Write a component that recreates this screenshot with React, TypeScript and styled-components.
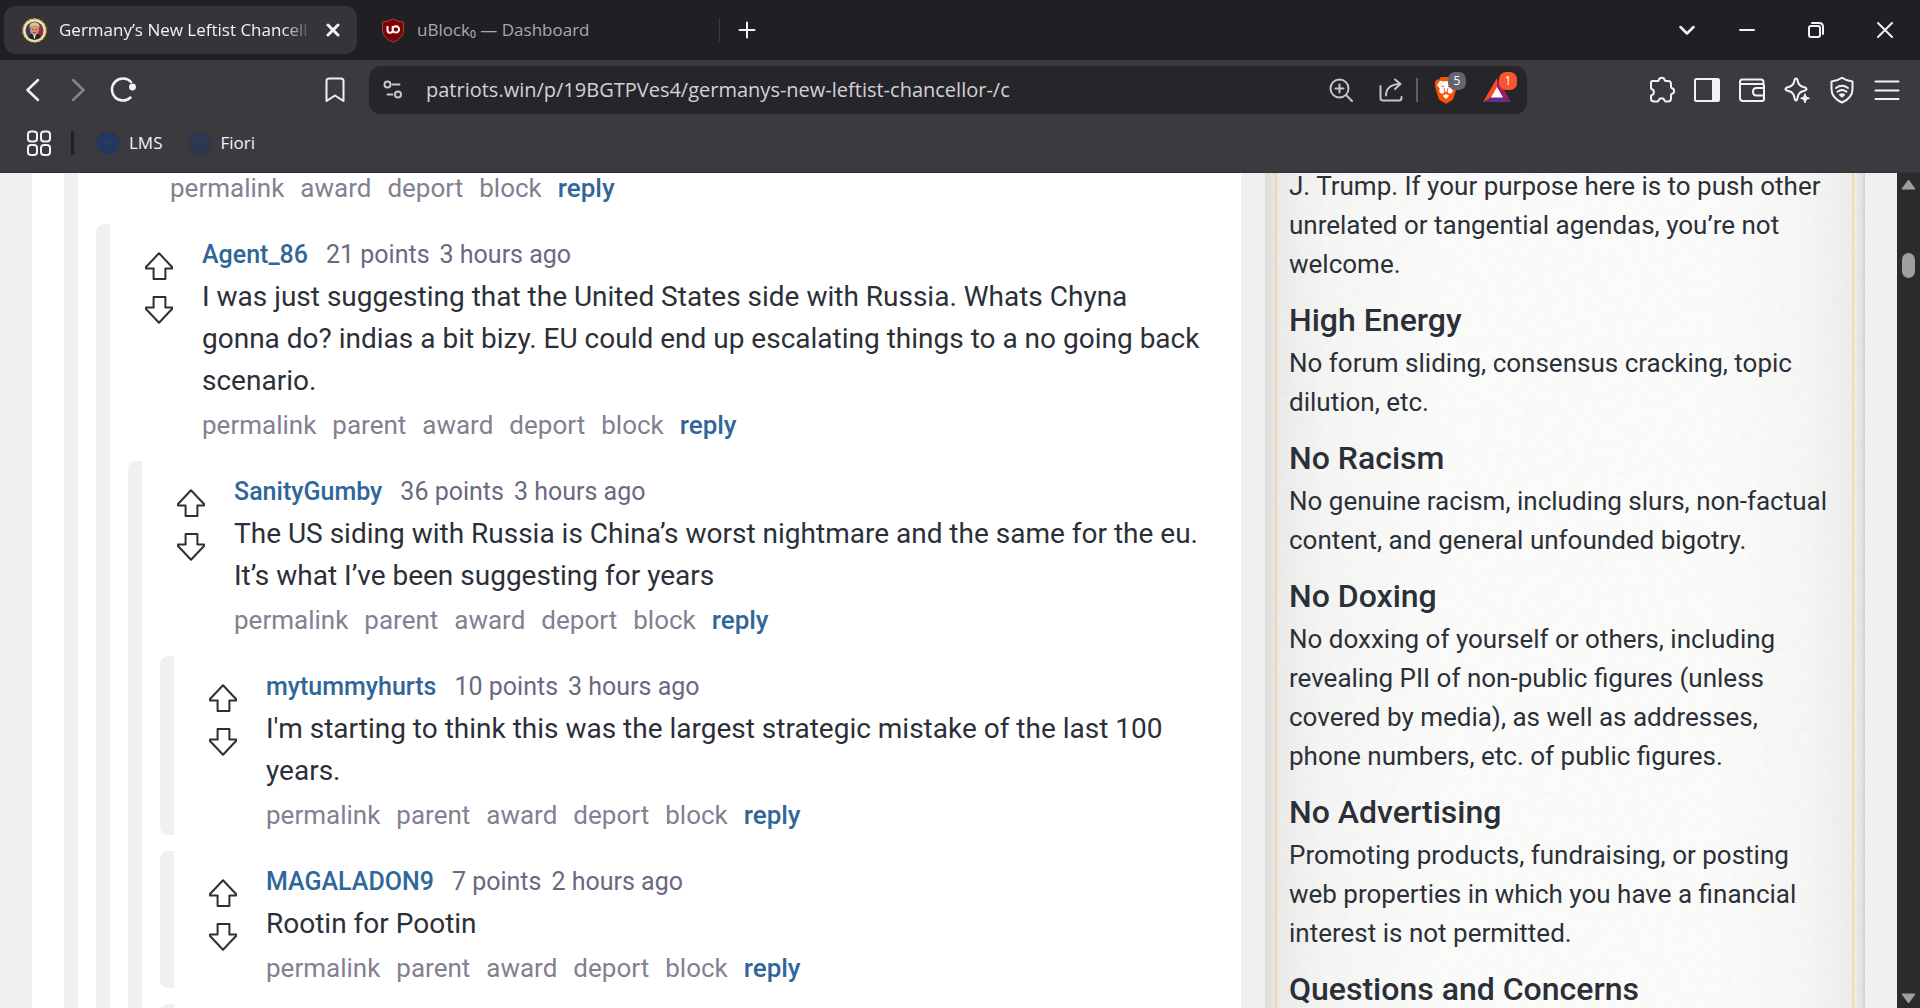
import React from "react";
import styled, { createGlobalStyle } from "styled-components";

const GlobalStyle = createGlobalStyle`
  *, *::before, *::after { box-sizing: border-box; }
  body { margin: 0; background: #eff0f2; overflow: hidden; }
  button, input { font: inherit; color: inherit; }
  h2, p { margin: 0; }
`;

const chromeFont = `"Open Sans", "Noto Sans", sans-serif`;
const pageFont = `Roboto, "Liberation Sans", sans-serif`;

const Browser = styled.div`
  display: flex;
  flex-direction: column;
  height: 100vh;
  overflow: hidden;
  font-family: ${chromeFont};
  color: #f2f2f5;
`;

/* ---------- tab strip ---------- */

const TabStrip = styled.header`
  display: flex;
  align-items: center;
  height: 60px;
  flex: none;
  padding: 0 1px 0 4px;
  background: #201f24;
`;

const Tab = styled.div<{ $active?: boolean }>`
  display: flex;
  align-items: center;
  gap: 12px;
  width: ${(p) => (p.$active ? 353 : 360)}px;
  height: 48px;
  padding: 0 16px 0 ${(p) => (p.$active ? 18 : 24)}px;
  border-radius: 12px;
  background: ${(p) => (p.$active ? "#353439" : "transparent")};
  color: ${(p) => (p.$active ? "#f2f2f5" : "#a9a8ad")};
  font-size: 17px;
  line-height: 24px;
`;

const TabTitle = styled.span<{ $fade?: boolean }>`
  flex: 1;
  min-width: 0;
  overflow: hidden;
  white-space: nowrap;
  mask-image: ${(p) => (p.$fade ? "linear-gradient(90deg, #000 88%, transparent)" : "none")};
`;

const TabSeparator = styled.span`
  width: 1px;
  height: 24px;
  margin-left: 2px;
  background: #3e3d42;
`;

const IconButton = styled.button<{ $width: number; $dim?: boolean }>`
  display: flex;
  align-items: center;
  justify-content: center;
  position: relative;
  flex: none;
  width: ${(p) => p.$width}px;
  height: 40px;
  padding: 0;
  border: 0;
  background: none;
  opacity: ${(p) => (p.$dim ? 0.4 : 1)};
`;

const WindowControls = styled.div`
  display: flex;
  align-items: center;
  margin-left: auto;
`;

/* ---------- toolbar ---------- */

const Toolbar = styled.div`
  display: flex;
  align-items: center;
  height: 60px;
  flex: none;
  padding: 0 11px 0 10px;
  background: #3b3a3e;
`;

const NavGroup = styled.nav`
  display: flex;
  width: 347px;
  margin-right: 12px;

  & > :last-child { margin-left: auto; }
`;

const AddressBar = styled.div`
  display: flex;
  align-items: center;
  flex: 1;
  min-width: 0;
  height: 48px;
  margin-right: 112px;
  padding: 0 5px 0 0;
  border-radius: 12px;
  background: #26252a;
  color: #c6c5ca;
`;

const AddressInput = styled.input`
  flex: 1;
  min-width: 0;
  margin-left: 9px;
  padding: 0;
  border: 0;
  outline: 0;
  background: none;
  color: #d3d2d7;
  font-size: 20px;
  line-height: 28px;
`;

const AddressSeparator = styled.span`
  width: 2px;
  height: 24px;
  margin: 0 2px 0 0;
  background: #5f5e63;
`;

const Badge = styled.span<{ $color: string }>`
  position: absolute;
  top: 2px;
  left: 28px;
  width: 18px;
  height: 18px;
  border-radius: 7px;
  background: ${(p) => p.$color};
  color: #fff;
  font-size: 12px;
  line-height: 18px;
  text-align: center;
`;

const BookmarkBar = styled.div`
  display: flex;
  align-items: center;
  height: 53px;
  flex: none;
  padding: 0 16px 6px;
  background: #3b3a3e;
  border-bottom: 1px solid #323135;
`;

const BarDivider = styled.span`
  width: 3px;
  height: 24px;
  margin: 0 22px 0 10px;
  border-radius: 2px;
  background: #201f24;
`;

const BookmarkLink = styled.a`
  display: flex;
  align-items: center;
  gap: 9px;
  margin-right: 25px;
  color: #f2f2f5;
  font-size: 17px;
  line-height: 24px;
  text-decoration: none;
`;

/* ---------- page ---------- */

const Viewport = styled.div`
  display: flex;
  flex: 1;
  min-height: 0;
  overflow: hidden;
  background: #eff0f2;
  color: #2b3038;
  font-family: ${pageFont};
`;

const Page = styled.div`
  display: flex;
  flex: 1;
  min-width: 0;
  gap: 24px;
  margin-top: -6px;
  padding: 0 32px;
`;

const Main = styled.main`
  flex: 1;
  min-width: 0;
  padding: 0 0 0 32px;
  background: #fff;
`;

const Thread = styled.section`
  min-height: 100%;
  padding: 2px 0 0 18px;
  border-left: 14px solid #eff0f2;
`;

const CommentBox = styled.article`
  margin-top: 16px;
  padding: 11px 0 0 18px;
  border-left: 14px solid #eff0f2;
  border-radius: 8px 0 0 8px;
`;

const CommentStub = styled(CommentBox)`
  height: 60px;
`;

const CommentRow = styled.div`
  display: flex;
`;

const Votes = styled.div`
  display: flex;
  flex: none;
  flex-direction: column;
  align-items: center;
  gap: 16px;
  width: 74px;
  padding: 17px 12px 0 0;
`;

const VoteButton = styled.button`
  display: flex;
  padding: 0;
  border: 0;
  background: none;
`;

const CommentContent = styled.div`
  flex: 1;
  min-width: 0;
  padding-right: 36px;
`;

const CommentHeader = styled.div`
  display: flex;
  padding-bottom: 2px;
  color: #6b687f;
  font-size: 25px;
  line-height: 39px;
`;

const Author = styled.a`
  margin-right: 18px;
  color: #306699;
  font-weight: 500;
  text-decoration: none;
`;

const Points = styled.span`
  margin-right: 10px;
`;

const CommentText = styled.p`
  font-size: 28px;
  line-height: 42px;
`;

const Actions = styled.div<{ $root?: boolean }>`
  display: flex;
  gap: 16px;
  padding: ${(p) => (p.$root ? "0 0 0 74px" : "4px 0 0")};
  font-size: 26px;
  line-height: 39px;
`;

const ActionLink = styled.a<{ $strong?: boolean }>`
  color: ${(p) => (p.$strong ? "#306699" : "#838091")};
  font-weight: ${(p) => (p.$strong ? 500 : 400)};
  text-decoration: none;
`;

const Sidebar = styled.aside`
  position: relative;
  flex: none;
  width: 600px;
  padding: 0 11px 0 10px;
  background: linear-gradient(90deg, #dddddc 0, #ececeb 14px, #f6f6f5 60px, #fcfcfb 30%, #fcfcfb 75%, #f7f7f6 540px, #ededec 590px, #e2e2e1 597px, #cfcfce 600px);
`;

const PaperGrain = styled.svg`
  position: absolute;
  inset: 0;
  width: 100%;
  height: 100%;
  opacity: 0.06;
`;

const Rules = styled.div`
  position: relative;
  height: 100%;
  padding: 0 20px 0 12px;
  border-left: 2px solid #eedab0;
  border-right: 2px solid #f0deaa;
`;

const RuleTitle = styled.h2`
  padding-top: 12px;
  font-size: 32px;
  font-weight: 500;
  line-height: 48px;
`;

const RuleText = styled.p`
  font-size: 26px;
  line-height: 39px;
`;

const ScrollTrack = styled.div`
  display: flex;
  flex: none;
  flex-direction: column;
  align-items: center;
  width: 23px;
  padding: 6px 0 4px;
  background: #2b2b2b;
`;

const ScrollThumb = styled.div`
  width: 13px;
  height: 25px;
  margin: 63px 0 auto;
  border-radius: 7px;
  background: #9f9f9f;
`;

/* ---------- icons ---------- */

type IconProps = { size?: number; width?: number; children: React.ReactNode };

const Icon = ({ size = 28, width = 2, children }: IconProps) => (
  <svg width={size} height={size} viewBox={`0 0 ${size} ${size}`} fill="none" stroke="currentColor"
    strokeWidth={width} strokeLinecap="round" strokeLinejoin="round" aria-hidden="true">
    {children}
  </svg>
);

const UpArrow = () => (
  <svg width="28" height="28" viewBox="0 0 28 28" fill="none" stroke="#2b3038" strokeWidth="2" strokeLinejoin="round" aria-hidden="true">
    <path d="M14 1.2 27 15v1.4h-6.6V27H8.6V16.4H1V15Z" />
  </svg>
);

const DownArrow = () => (
  <svg width="28" height="28" viewBox="0 0 28 28" fill="none" stroke="#2b3038" strokeWidth="2" strokeLinejoin="round" aria-hidden="true">
    <path d="M14 26.8 27 13v-1.4h-6.6V1H8.6v10.6H1V13Z" />
  </svg>
);

const PortraitIcon = () => (
  <svg width="25" height="25" viewBox="0 0 25 25" aria-hidden="true">
    <circle cx="12.5" cy="12.5" r="11.500" fill="#ece6cf" stroke="#d9bd3c" strokeWidth="1.5" strokeDasharray="3 1" />
    <circle cx="12.5" cy="12.5" r="9" fill="#3b3f58" />
    <path d="M17 6.5 21 10v7l-4 2Z" fill="#a8283a" />
    <path d="M5.500 18.500q3-3 7-3t7 3q-3 3.300-7 3.300t-7-3.300Z" fill="#23242e" />
    <path d="m11 16 1.500 5.500L14 16Z" fill="#f3f0ee" />
    <ellipse cx="12.5" cy="11.500" rx="4.500" ry="5.600" fill="#d19473" />
    <path d="M7.500 10q-.5-5.500 5-5.700 5.500.2 5 5.500-1.500-2.500-5-2.500T7.500 10Z" fill="#e5c48a" />
    <path d="M10 11.500h1.500m2 0H15M11 14.500h3" stroke="#7b4a3a" strokeWidth="1" />
  </svg>
);

const UblockIcon = () => (
  <svg width="24" height="25" viewBox="0 0 24 25" aria-hidden="true">
    <path d="M12 .8Q17 4 22.500 4v8q0 8-10.500 12.300Q1.500 20 1.500 12V4Q7 4 12 .8Z" fill="#800000" stroke="#8d4a4a" strokeWidth="1" />
    <path d="M6.500 8v4.200q0 2.500 2.600 2.500t2.600-2.500V8m0 3.400a3.200 3.200 0 1 0 3.200-3.200 3.200 3.200 0 0 0-3.200 3.200Z" fill="none" stroke="#fff" strokeWidth="2" />
  </svg>
);

const BraveIcon = () => (
  <svg width="24" height="28" viewBox="0 0 24 28" aria-hidden="true">
    <path d="M7 1h10l2.500 2.700 2-.2L23.500 7l-.8 2.200.3 1.500-3.500 11.500q-.5 1.300-1.500 2L12 27.700l-6-3.500q-1-.7-1.500-2L1 10.700l.3-1.500L.5 7l2-3.500 2 .2Z" fill="#fb5107" />
    <path d="m12 5 2.500.5 3.500-.7 3 4.200-2.800 3.700.7 2.300-1.200 2-2.200.8-1.500-1-.3-2.500 1-2.300L12 13l-2.700-1 1 2.300-.3 2.500-1.500 1-2.200-.8-1.200-2 .7-2.300L3 9l3-4.200 3.500.7Z" fill="#fff" />
    <path d="m12 9 1.200 5-1.200 3-1.200-3ZM12 18l3.300 1.700L12 23l-3.300-3.300Z" fill="#fff" />
    <path d="m6.800 9.500 3.400.8-.8 1.200ZM17.200 9.500l-3.400.8.8 1.200Z" fill="#fb5107" />
  </svg>
);

const BatIcon = () => (
  <svg width="28" height="25" viewBox="0 0 28 25" aria-hidden="true">
    <path d="M14 0 0 24l9-5 5-9Z" fill="#ff4724" />
    <path d="m14 0 14 24-9-5-5-9Z" fill="#9e1f63" />
    <path d="M0 24h28l-9-5H9Z" fill="#662d91" />
    <path d="m14 9 6 10.500H8Z" fill="#fff" />
  </svg>
);

const SealIcon = ({ soft }: { soft?: boolean }) => (
  <svg width="24" height="24" viewBox="0 0 24 24" opacity={soft ? 0.6 : 1} aria-hidden="true">
    <circle cx="12" cy="12" r="11.500" fill="#22365f" />
    <circle cx="12" cy="12" r="8.500" fill="none" stroke="#303f63" strokeWidth="1" strokeDasharray="2 1" />
    <path d="M8 9.500 12 7l4 2.500v5L12 17l-4-2.500Zm0 2.500h8m-6-3v6m4-6v6" fill="none" stroke="#303f63" strokeWidth="1" />
  </svg>
);

/* ---------- content ---------- */

const comments = {
  agent: {
    author: "Agent_86",
    points: "21 points",
    age: "3 hours ago",
    text: "I was just suggesting that the United States side with Russia. Whats Chyna gonna do? indias a bit bizy. EU could end up escalating things to a no going back scenario.",
  },
  sanity: {
    author: "SanityGumby",
    points: "36 points",
    age: "3 hours ago",
    text: "The US siding with Russia is China’s worst nightmare and the same for the eu. It’s what I’ve been suggesting for years",
  },
  tummy: {
    author: "mytummyhurts",
    points: "10 points",
    age: "3 hours ago",
    text: "I'm starting to think this was the largest strategic mistake of the last 100 years.",
  },
  magaladon: {
    author: "MAGALADON9",
    points: "7 points",
    age: "2 hours ago",
    text: "Rootin for Pootin",
  },
};

const rules = [
  { title: "High Energy", text: "No forum sliding, consensus cracking, topic dilution, etc." },
  { title: "No Racism", text: "No genuine racism, including slurs, non-factual content, and general unfounded bigotry." },
  { title: "No Doxing", text: "No doxxing of yourself or others, including revealing PII of non-public figures (unless covered by media), as well as addresses, phone numbers, etc. of public figures." },
  { title: "No Advertising", text: "Promoting products, fundraising, or posting web properties in which you have a financial interest is not permitted." },
];

const ActionList = ({ root }: { root?: boolean }) => {
  const names = root ? ["permalink", "award", "deport", "block"] : ["permalink", "parent", "award", "deport", "block"];
  return (
    <Actions $root={root}>
      {names.map((name) => (
        <ActionLink key={name} href="#">{name}</ActionLink>
      ))}
      <ActionLink href="#" $strong>reply</ActionLink>
    </Actions>
  );
};

type CommentData = { author: string; points: string; age: string; text: string };

const Comment = ({ data, children }: { data: CommentData; children?: React.ReactNode }) => (
  <CommentBox>
    <CommentRow>
      <Votes>
        <VoteButton aria-label="Upvote"><UpArrow /></VoteButton>
        <VoteButton aria-label="Downvote"><DownArrow /></VoteButton>
      </Votes>
      <CommentContent>
        <CommentHeader>
          <Author href="#">{data.author}</Author>
          <Points>{data.points}</Points>
          <span>{data.age}</span>
        </CommentHeader>
        <CommentText>{data.text}</CommentText>
        <ActionList />
      </CommentContent>
    </CommentRow>
    {children}
  </CommentBox>
);

const BrowserTabs = () => (
  <TabStrip>
    <Tab $active>
      <PortraitIcon />
      <TabTitle $fade>Germany’s New Leftist Chancell</TabTitle>
      <IconButton $width={16} aria-label="Close tab">
        <Icon size={14} width={3}><path d="m2 2 10 10M12 2 2 12" /></Icon>
      </IconButton>
    </Tab>
    <Tab>
      <UblockIcon />
      <TabTitle>uBlock₀ — Dashboard</TabTitle>
    </Tab>
    <TabSeparator />
    <IconButton $width={54} aria-label="New tab">
      <Icon size={18}><path d="M9 1.500v15M1.500 9h15" /></Icon>
    </IconButton>
    <WindowControls>
      <IconButton $width={52} aria-label="Search tabs">
        <Icon size={18} width={2.5}><path d="m2.500 6 6.500 6.500L15.500 6" /></Icon>
      </IconButton>
      <IconButton $width={68} aria-label="Minimize">
        <Icon size={16}><path d="M1 8h14" /></Icon>
      </IconButton>
      <IconButton $width={69} aria-label="Restore">
        <Icon size={18}><rect x="2" y="5" width="11" height="11" rx="2" /><path d="M5 2h7q4 0 4 4v7" /></Icon>
      </IconButton>
      <IconButton $width={69} aria-label="Close window">
        <Icon size={18}><path d="m2 2 14 14M16 2 2 16" /></Icon>
      </IconButton>
    </WindowControls>
  </TabStrip>
);

const BrowserToolbar = () => (
  <Toolbar>
    <NavGroup>
      <IconButton $width={45} aria-label="Back">
        <Icon width={2.5}><path d="M19 4 8.500 14 19 24" /></Icon>
      </IconButton>
      <IconButton $width={45} $dim aria-label="Forward">
        <Icon width={2.5}><path d="M9 4l10.500 10L9 24" /></Icon>
      </IconButton>
      <IconButton $width={45} aria-label="Reload">
        <Icon width={2.500}><path d="M22 6A11 11 0 1 0 21.500 21.500" /><circle cx="23.500" cy="11" r="2.200" fill="currentColor" /></Icon>
      </IconButton>
      <IconButton $width={44} aria-label="Bookmark this page">
        <Icon><path d="M5.500 25V5q0-2.500 2.500-2.500h12q2.500 0 2.500 2.500v20L14 19.500Z" /></Icon>
      </IconButton>
    </NavGroup>
    <AddressBar>
      <IconButton $width={48} aria-label="Site settings">
        <Icon size={20}><circle cx="4.500" cy="4.500" r="3" /><path d="M9.500 4.500h7M4.500 14.500h5" /><circle cx="15" cy="14.500" r="3" /></Icon>
      </IconButton>
      <AddressInput aria-label="Address" defaultValue="patriots.win/p/19BGTPVes4/germanys-new-leftist-chancellor-/c" />
      <IconButton $width={50} aria-label="Zoom">
        <Icon size={24}><circle cx="10.500" cy="10.500" r="9" /><path d="m17.500 17.500 5.500 5.500M10.500 6.500v8M6.500 10.500h8" /></Icon>
      </IconButton>
      <IconButton $width={50} aria-label="Share">
        <Icon size={24}><path d="M1.500 8v12q0 2.500 2.500 2.500h16q2.500 0 2.500-2.500v-1M7 17.500q0-10.500 13-11.500M16 1.500 21.500 6 16 11" /></Icon>
      </IconButton>
      <AddressSeparator />
      <IconButton $width={51} aria-label="Brave Shields">
        <BraveIcon />
        <Badge $color="#62646f">5</Badge>
      </IconButton>
      <IconButton $width={51} aria-label="Brave Rewards">
        <BatIcon />
        <Badge $color="#fb542b">1</Badge>
      </IconButton>
    </AddressBar>
    <IconButton $width={45} aria-label="Extensions">
      <Icon><path d="M4.500 5h5.500q.7 0 .8-.8a3 3 0 0 1 5.900 0q.1.800.8.800H20q3 0 3 3v3q0 1 1 1.200a2.900 2.900 0 0 1 0 5.600q-1 .2-1 1.200v3.500q0 3-3 3h-2.500q-.7 0-.9-.9a3.100 3.100 0 0 0-6 0q-.2.900-1 .9H6q-3 0-3-3v-2.500q0-.8.9-1a3 3 0 0 0 0-5.700Q3 13 3 12.200V6.500Q3 5 4.500 5Z" /></Icon>
    </IconButton>
    <IconButton $width={45} aria-label="Side panel">
      <Icon><rect x="2" y="3" width="24" height="22" rx="1.500" /><path d="M20 4h5v20h-5Z" fill="currentColor" /></Icon>
    </IconButton>
    <IconButton $width={45} aria-label="Wallet">
      <Icon><path d="M25.500 7.500V6q0-2.500-2.500-2.500H4Q2 3.500 2 6t2 2h20q2 0 2 2v13q0 2-2 2H5q-3 0-3-3V6M26 12h-7.500q-3.500 0-3.500 3.700t3.500 3.800H26" /></Icon>
    </IconButton>
    <IconButton $width={45} aria-label="Leo AI">
      <Icon><path d="M13 2.500q1.200 0 1.700 2.500 1 5 5.800 6 3 .8 3 2t-3 2q-4.800 1-5.800 6-.5 3.500-1.700 3.500T11.300 21q-1-5-5.800-6-3-.8-3-2t3-2q4.800-1 5.800-6 .5-2.500 1.700-2.500Z" /><path d="m22 18 1.200 3 3.300 1.300-3.300 1.200L22 27l-1.300-3.500-3-1.200 3-1.300Z" fill="currentColor" strokeWidth="1" /></Icon>
    </IconButton>
    <IconButton $width={45} aria-label="VPN">
      <Icon><path d="M14 1.800Q18.500 5 24.500 5.500V13q0 9-10.500 13.500Q3.500 22 3.500 13V5.500Q9.500 5 14 1.800ZM8 12q6-4.500 12 0M9.500 15.700q4.500-3.500 9 0" /><path d="M12 18.800q2-1.200 4 0l-2 1.700Z" fill="currentColor" /></Icon>
    </IconButton>
    <IconButton $width={45} aria-label="Menu">
      <Icon width={2}><path d="M2.500 5.500h23M2.500 14.500h23M2.500 23h23" /></Icon>
    </IconButton>
  </Toolbar>
);

const Bookmarks = () => (
  <BookmarkBar>
    <IconButton $width={45} aria-label="Tab groups">
      <Icon><rect x="3" y="2.500" width="9" height="10" rx="3" /><rect x="16" y="2.500" width="9" height="10" rx="3" /><rect x="3" y="16" width="9" height="10" rx="3" /><rect x="16" y="16" width="9" height="10" rx="3" /></Icon>
    </IconButton>
    <BarDivider />
    <BookmarkLink href="#"><SealIcon />LMS</BookmarkLink>
    <BookmarkLink href="#"><SealIcon soft />Fiori</BookmarkLink>
  </BookmarkBar>
);

export default function App() {
  return (
    <Browser>
      <GlobalStyle />
      <BrowserTabs />
      <BrowserToolbar />
      <Bookmarks />
      <Viewport>
        <Page>
          <Main>
            <Thread>
              <ActionList root />
              <Comment data={comments.agent}>
                <Comment data={comments.sanity}>
                  <Comment data={comments.tummy} />
                  <Comment data={comments.magaladon} />
                  <CommentStub />
                </Comment>
              </Comment>
            </Thread>
          </Main>
          <Sidebar>
            <PaperGrain aria-hidden="true">
              <filter id="grain">
                <feTurbulence type="fractalNoise" baseFrequency="0.12 0.2" numOctaves="3" />
                <feColorMatrix type="saturate" values="0" />
              </filter>
              <rect width="100%" height="100%" filter="url(#grain)" />
            </PaperGrain>
            <Rules>
              <RuleText>J. Trump. If your purpose here is to push other unrelated or tangential agendas, you’re not welcome.</RuleText>
              {rules.map((rule) => (
                <React.Fragment key={rule.title}>
                  <RuleTitle>{rule.title}</RuleTitle>
                  <RuleText>{rule.text}</RuleText>
                </React.Fragment>
              ))}
              <RuleTitle>Questions and Concerns</RuleTitle>
            </Rules>
          </Sidebar>
        </Page>
        <ScrollTrack aria-hidden="true">
          <svg width="15" height="11" viewBox="0 0 15 11"><path d="M7.500 1 14 10H1Z" fill="#9f9f9f" stroke="#9f9f9f" strokeLinejoin="round" /></svg>
          <ScrollThumb />
          <svg width="15" height="11" viewBox="0 0 15 11"><path d="M7.500 10 14 1H1Z" fill="#9f9f9f" stroke="#9f9f9f" strokeLinejoin="round" /></svg>
        </ScrollTrack>
      </Viewport>
    </Browser>
  );
}
